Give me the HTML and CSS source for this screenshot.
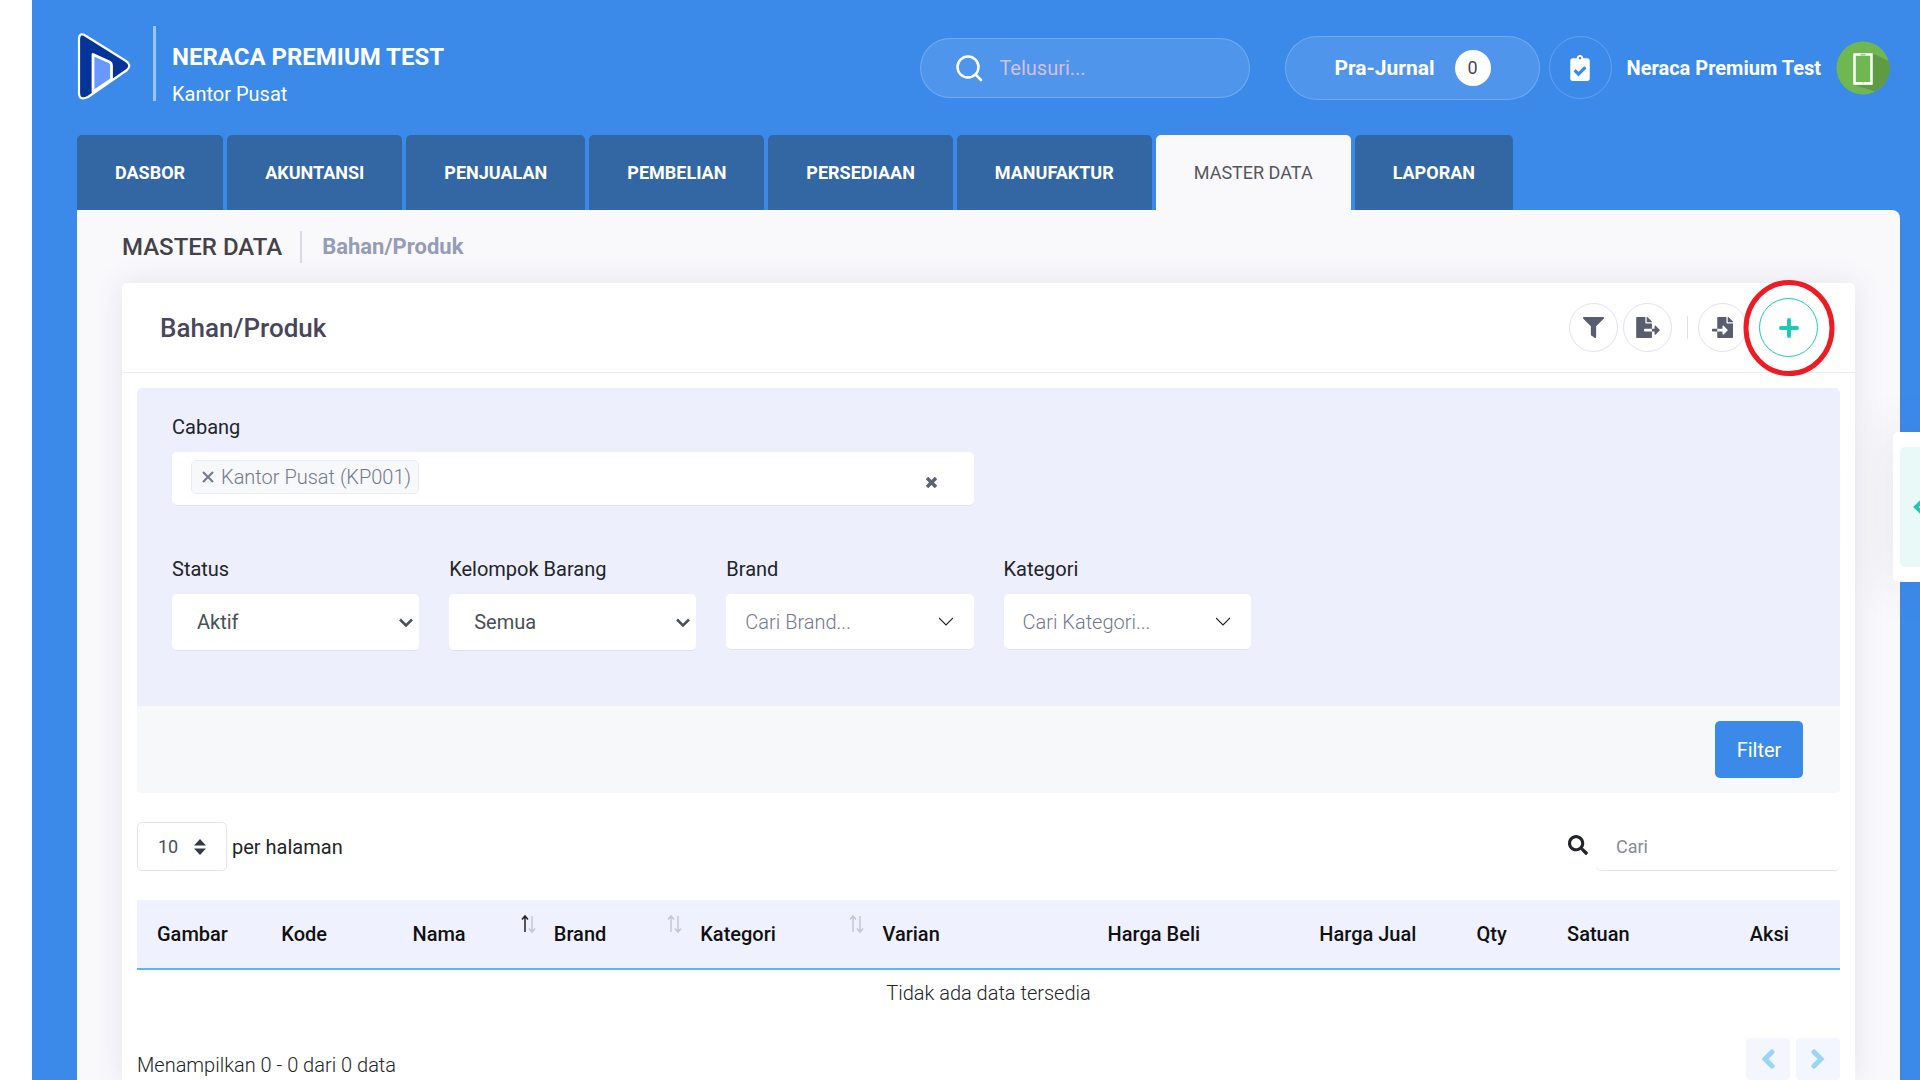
FILE: index.html
```html
<!DOCTYPE html>
<html lang="id">
<head>
  <meta charset="UTF-8" />
  <title>Bahan/Produk</title>
  <link rel="stylesheet" href="styles.css">
</head>
<body>
  <header class="topbar">
    <a class="brand" href="#" aria-label="Neraca">
      <svg width="54" height="68" viewBox="0 0 54 68">
        <path d="M2 7C2 2 5 1 9 4L49 29Q55 33 50 38L11 65Q2 69 2 61Z" fill="#053399" stroke="#fff" stroke-width="2.2" stroke-linejoin="round"/>
        <path d="M16 60V22.500L32.500 30Q34.500 31 34.500 33V47.500Z" fill="#6999ff" stroke="#fff" stroke-width="2.8" stroke-linejoin="round"/>
      </svg>
    </a>
    <div class="company">
      <div class="company-name">NERACA PREMIUM TEST</div>
      <div class="company-branch">Kantor Pusat</div>
    </div>

    <label class="search">
      <svg width="28" height="28" viewBox="0 0 28 28" fill="none" stroke="#fff" stroke-width="2.500" stroke-linecap="round">
        <circle cx="13" cy="13" r="10.500"/>
        <path d="M20.500 20.500L26 26"/>
      </svg>
      <input type="text" placeholder="Telusuri..." aria-label="Telusuri" />
    </label>

    <button class="journal">Pra-Jurnal <span class="count">0</span></button>

    <div class="user">
      <button class="task" aria-label="Tugas">
        <svg width="20" height="26" viewBox="0 0 384 512" fill="#fff">
          <path d="M336 64h-80c0-35.300-28.700-64-64-64s-64 28.700-64 64H48C21.500 64 0 85.500 0 112v352c0 26.500 21.500 48 48 48h288c26.500 0 48-21.500 48-48V112c0-26.500-21.500-48-48-48zM192 40c13.300 0 24 10.700 24 24s-10.700 24-24 24-24-10.700-24-24 10.700-24 24-24zm121.200 231.800l-143 141.800c-4.700 4.700-12.300 4.600-17-.1l-82.600-83.300c-4.700-4.700-4.600-12.300.1-17L99.100 285c4.700-4.700 12.300-4.600 17 .1l46 46.400 106-105.200c4.700-4.700 12.300-4.600 17 .1l28.200 28.400c4.700 4.800 4.600 12.300-.1 17z"/>
        </svg>
      </button>
      <a class="user-name" href="#">Neraca Premium Test</a>
      <svg class="avatar" width="54" height="54" viewBox="0 0 54 54">
        <circle cx="27" cy="27" r="26.500" fill="#6fb851"/>
        <path d="M36.500 12.500L53 20A26.500 26.500 0 0 1 39 50.500L18 43.500Z" fill="#5f9b43"/>
        <rect x="18.500" y="13.500" width="17" height="29" fill="#6fb851" stroke="#fff" stroke-width="2.500"/>
        <path d="M18 41h18v2.500H18z" fill="#fff"/>
        <path d="M24.500 13.800h5M26.500 42h1" stroke="#6fb851"/>
      </svg>
    </div>
  </header>

  <nav class="tabs">
    <a href="#">DASBOR</a>
    <a href="#">AKUNTANSI</a>
    <a href="#">PENJUALAN</a>
    <a href="#">PEMBELIAN</a>
    <a href="#">PERSEDIAAN</a>
    <a href="#">MANUFAKTUR</a>
    <a href="#" class="active">MASTER DATA</a>
    <a href="#">LAPORAN</a>
  </nav>

  <main class="content">
    <div class="breadcrumb">
      <h1>MASTER DATA</h1>
      <a href="#">Bahan/Produk</a>
    </div>

    <section class="card">
      <div class="card-head">
        <h2>Bahan/Produk</h2>
        <div class="tools">
          <button class="tool" aria-label="Filter">
            <svg width="21" height="21" viewBox="0 0 512 512">
              <path d="M487.976 0H24.028C2.710 0-8.047 25.866 7.058 40.971L192 225.941V432c0 7.831 3.821 15.170 10.237 19.662l80 55.980C298.020 518.690 320 507.493 320 487.980V225.941l184.947-184.970C520.021 25.896 509.338 0 487.976 0z"/>
            </svg>
          </button>
          <button class="tool" aria-label="Ekspor">
            <svg width="24" height="21" viewBox="0 0 576 512">
              <path d="M384 121.900c0-6.300-2.500-12.400-7-16.900L279.100 7c-4.500-4.500-10.600-7-17-7H256v128h128zM571 308l-95.700-96.400c-10.100-10.100-27.400-3-27.400 11.300V288h-64v64h64v65.200c0 14.300 17.300 21.400 27.400 11.300L571 332c6.600-6.600 6.600-17.400 0-24zm-379 28v-32c0-8.800 7.200-16 16-16h176V160H248c-13.200 0-24-10.800-24-24V0H24C10.700 0 0 10.700 0 24v464c0 13.300 10.700 24 24 24h336c13.300 0 24-10.700 24-24V352H208c-8.800 0-16-7.200-16-16z"/>
            </svg>
          </button>
          <span class="tool-divider"></span>
          <button class="tool" aria-label="Impor">
            <svg width="21" height="21" viewBox="0 0 512 512">
              <path d="M16 288c-8.800 0-16 7.200-16 16v32c0 8.800 7.200 16 16 16h112v-64zm489-183L407.100 7c-4.500-4.500-10.600-7-17-7H384v128h128v-6.100c0-6.300-2.500-12.400-7-16.900zm-153 31V0H152c-13.300 0-24 10.700-24 24v264h128v-65.200c0-14.300 17.300-21.400 27.400-11.300L379 308c6.600 6.700 6.600 17.400 0 24l-95.700 96.400c-10.100 10.100-27.400 3-27.400-11.300V352H128v136c0 13.300 10.700 24 24 24h336c13.300 0 24-10.700 24-24V160H376c-13.200 0-24-10.800-24-24z"/>
            </svg>
          </button>
          <div class="add-wrap">
            <button class="tool add" aria-label="Tambah">
              <svg width="20" height="20" viewBox="0 0 20 20" stroke-width="4" stroke-linecap="round">
                <path d="M10 2v16M2 10h16"/>
              </svg>
            </button>
            <svg class="marker" width="92" height="96" viewBox="0 0 92 96">
              <ellipse cx="46" cy="48" rx="43" ry="45.500" fill="none" stroke="#ed1c24" stroke-width="5"/>
            </svg>
          </div>
        </div>
      </div>

      <div class="card-body">
        <form class="filter">
          <div class="filter-fields">
            <div class="field wide">
              <label for="cabang">Cabang</label>
              <div class="multi">
                <span class="tag"><button type="button" aria-label="Hapus">
                  <svg width="12" height="12" viewBox="0 0 12 12" fill="none" stroke="#74788d" stroke-width="2"><path d="M1 1l10 10M11 1L1 11"/></svg>
                </button>Kantor Pusat (KP001)</span>
                <input type="text" id="cabang" />
                <button type="button" class="clear" aria-label="Bersihkan">
                  <svg width="11" height="11" viewBox="0 0 11 11" fill="none" stroke="#5c6173" stroke-width="3.500"><path d="M1 1l9 9M10 1L1 10"/></svg>
                </button>
              </div>
            </div>
            <div class="field">
              <label for="status">Status</label>
              <div class="pick">
                <select id="status"><option>Aktif</option></select>
                <svg width="14" height="10" viewBox="0 0 14 10"><path d="M1 1.500l6 6 6-6"/></svg>
              </div>
            </div>
            <div class="field">
              <label for="kelompok">Kelompok Barang</label>
              <div class="pick">
                <select id="kelompok"><option>Semua</option></select>
                <svg width="14" height="10" viewBox="0 0 14 10"><path d="M1 1.500l6 6 6-6"/></svg>
              </div>
            </div>
            <div class="field">
              <label for="brand">Brand</label>
              <div class="pick lookup">
                <select id="brand"><option>Cari Brand...</option></select>
                <svg width="14" height="10" viewBox="0 0 14 10"><path d="M0 1l7 7 7-7"/></svg>
              </div>
            </div>
            <div class="field">
              <label for="kategori">Kategori</label>
              <div class="pick lookup">
                <select id="kategori"><option>Cari Kategori...</option></select>
                <svg width="14" height="10" viewBox="0 0 14 10"><path d="M0 1l7 7 7-7"/></svg>
              </div>
            </div>
          </div>
          <div class="filter-foot">
            <button type="button" class="btn-filter">Filter</button>
          </div>
        </form>

        <div class="table-bar">
          <label class="per-page">
            <span class="page-size">
              <select><option>10</option></select>
              <svg width="12" height="16" viewBox="0 0 12 16" fill="#343a40"><path d="M0 6.500L6 0l6 6.500zM0 9.500h12L6 16z"/></svg>
            </span>
            per halaman
          </label>
          <label class="table-search">
            <svg width="20" height="20" viewBox="0 0 512 512" fill="#212529">
              <path d="M505 442.700L405.300 343c-4.500-4.500-10.600-7-17-7H372c27.600-35.300 44-79.700 44-128C416 93.100 322.900 0 208 0S0 93.100 0 208s93.100 208 208 208c48.300 0 92.700-16.400 128-44v16.300c0 6.400 2.500 12.500 7 17l99.700 99.700c9.400 9.400 24.600 9.400 33.900 0l28.300-28.300c9.400-9.400 9.400-24.600.1-34zM208 336c-70.700 0-128-57.200-128-128 0-70.700 57.200-128 128-128 70.700 0 128 57.200 128 128 0 70.700-57.200 128-128 128z"/>
            </svg>
            <input type="text" placeholder="Cari" aria-label="Cari" />
          </label>
        </div>

        <table class="products">
          <thead>
            <tr>
              <th class="c-gambar">Gambar</th>
              <th class="c-kode">Kode</th>
              <th class="c-nama">
                <div class="sort asc">Nama
                  <svg width="12" height="18" viewBox="0 0 12 18"><path class="up" d="M3 17V1M0 4.500L3 1l3 3.500"/><path class="down" d="M10 1v16M7 13.500l3 3.500 3-3.500"/></svg>
                </div>
              </th>
              <th class="c-brand">
                <div class="sort">Brand
                  <svg width="12" height="18" viewBox="0 0 12 18"><path class="up" d="M3 17V1M0 4.500L3 1l3 3.500"/><path class="down" d="M10 1v16M7 13.500l3 3.500 3-3.500"/></svg>
                </div>
              </th>
              <th class="c-kategori">
                <div class="sort">Kategori
                  <svg width="12" height="18" viewBox="0 0 12 18"><path class="up" d="M3 17V1M0 4.500L3 1l3 3.500"/><path class="down" d="M10 1v16M7 13.500l3 3.500 3-3.500"/></svg>
                </div>
              </th>
              <th class="c-varian">Varian</th>
              <th class="c-beli">Harga Beli</th>
              <th class="c-jual">Harga Jual</th>
              <th class="c-qty">Qty</th>
              <th class="c-satuan">Satuan</th>
              <th class="c-aksi">Aksi</th>
            </tr>
          </thead>
          <tbody>
            <tr><td colspan="11">Tidak ada data tersedia</td></tr>
          </tbody>
        </table>

        <div class="table-foot">
          <span>Menampilkan 0 - 0 dari 0 data</span>
          <div class="pager">
            <button aria-label="Sebelumnya"><svg width="14" height="20" viewBox="0 0 14 20"><path d="M11 3l-7 7 7 7"/></svg></button>
            <button aria-label="Berikutnya"><svg width="14" height="20" viewBox="0 0 14 20"><path d="M3 3l7 7-7 7"/></svg></button>
          </div>
        </div>
      </div>
    </section>
  </main>

  <aside class="drawer">
    <button aria-label="Buka panel">
      <svg width="14" height="14" viewBox="0 0 14 14" fill="none" stroke="#1dc9b7" stroke-width="4"><path d="M10 1L4 7l6 6"/></svg>
    </button>
  </aside>
</body>
</html>
```

FILE: styles.css
```css
* {
  box-sizing: border-box;
}

html {
  background-color: #fff;
}

body {
  margin: 0 0 0 32px;
  min-height: 100vh;
  background-color: #3b8aea;
  font-family: Roboto, sans-serif;
  font-size: 20px;
  line-height: 30px;
  color: #212529;
  display: flex;
  flex-direction: column;
  overflow-x: hidden;
}

button, input, select {
  font: inherit;
  color: inherit;
  background: none;
  border: none;
  padding: 0;
  outline: none;
}

button {
  cursor: pointer;
}

a {
  color: inherit;
  text-decoration: none;
}

svg {
  display: block;
  flex: none;
}

/* header */
.topbar {
  height: 135px;
  padding: 0 30px 0 45px;
  display: flex;
  align-items: center;
  color: #fff;
}

.brand {
  width: 76px;
  padding-bottom: 3px;
}

.company {
  margin-right: auto;
  padding: 16px 0 0 16px;
  border-left: 3px solid rgba(255, 255, 255, 0.5);
  height: 75px;
  margin-bottom: 8px;
}

.company-name {
  font-size: 24px;
  font-weight: 700;
}

.company-branch {
  padding-top: 8px;
  line-height: 28px;
}

.search {
  width: 330px;
  height: 60px;
  margin-right: 35px;
  padding: 0 34px;
  display: flex;
  align-items: center;
  gap: 16px;
  border: 1px solid rgba(255, 255, 255, 0.2);
  border-radius: 30px;
  background-color: rgba(255, 255, 255, 0.1);
}

.search input {
  width: 100%;
}

.search input::placeholder {
  color: #d3bfe4;
}

.journal {
  height: 64px;
  padding: 0 48px;
  display: flex;
  align-items: center;
  gap: 20px;
  font-size: 21px;
  font-weight: 700;
  border: 1px solid rgba(255, 255, 255, 0.2);
  border-radius: 32px;
  background-color: rgba(255, 255, 255, 0.1);
}

.count {
  width: 36px;
  line-height: 36px;
  border-radius: 50%;
  background-color: #fff;
  color: #48465b;
  font-size: 18px;
  font-weight: 400;
}

.user {
  display: flex;
  align-items: center;
  margin-left: 9px;
}

.task {
  width: 63px;
  height: 63px;
  display: grid;
  place-items: center;
  border: 1px solid rgba(255, 255, 255, 0.2);
  border-radius: 50%;
}

.user-name {
  margin: 0 15px;
  font-weight: 700;
}

/* main menu */
.tabs {
  display: flex;
  gap: 4px;
  padding-left: 45px;
}

.tabs a {
  padding: 0 38px;
  line-height: 75px;
  border-radius: 5px 5px 0 0;
  background-color: #3267a3;
  color: #fff;
  font-size: 18px;
  font-weight: 700;
}

.tabs .active {
  background-color: #f9f9fc;
  color: #55575c;
  font-weight: 400;
}

/* content */
.content {
  flex: 1;
  margin: 0 20px 0 45px;
  padding: 0 45px;
  border-radius: 0 8px 0 0;
  background-color: #f9f9fc;
  display: flex;
  flex-direction: column;
}

.breadcrumb {
  height: 73px;
  display: flex;
  align-items: center;
}

.breadcrumb h1 {
  margin: 0;
  padding-right: 18px;
  border-right: 2px solid #dcdae8;
  font-size: 24px;
  font-weight: 500;
  line-height: 32px;
  color: #434349;
}

.breadcrumb a {
  padding-left: 20px;
  font-size: 22px;
  font-weight: 700;
  color: #959cb6;
}

.card {
  flex: 1;
  border-radius: 5px 5px 0 0;
  background-color: #fff;
  box-shadow: 0 0 30px rgba(82, 63, 105, 0.12);
}

.card-head {
  height: 90px;
  padding: 0 37px 0 38px;
  display: flex;
  align-items: center;
  justify-content: space-between;
  border-bottom: 1px solid #ebedf2;
}

.card-head h2 {
  margin: 0;
  font-size: 26px;
  font-weight: 500;
  color: #48465b;
}

.tools {
  display: flex;
  align-items: center;
  gap: 5px;
}

.tool {
  width: 49px;
  height: 49px;
  display: grid;
  place-items: center;
  border: 1px solid #e2e2ec;
  border-radius: 50%;
  fill: #595d6e;
}

.tool-divider {
  width: 1px;
  height: 23px;
  margin: 0 5px 0 10px;
  background-color: #dfdfe8;
}

.add-wrap {
  position: relative;
  margin-left: 7px;
}

.add {
  width: 59px;
  height: 59px;
  border-color: #1dc9b7;
  stroke: #1dc9b7;
}

.marker {
  position: absolute;
  left: -16px;
  top: -18px;
  pointer-events: none;
}

.card-body {
  padding: 15px 15px 0;
}

/* filter */
.filter {
  border-radius: 5px;
  overflow: hidden;
  background-color: #edeffd;
}

.filter-fields {
  display: grid;
  grid-template-columns: repeat(6, 1fr);
  gap: 48px 30px;
  padding: 24px 35px 55px;
}

.field {
  min-width: 0;
}

.wide {
  grid-column: span 3;
}

.wide + .field {
  grid-column-start: 1;
}

.field label {
  display: block;
  margin-bottom: 10px;
}

.multi {
  height: 54px;
  padding: 0 37px 0 19px;
  display: flex;
  align-items: center;
  border-radius: 5px;
  border-bottom: 1px solid #dfe1ee;
  background-color: #fff;
}

.multi input {
  flex: 1;
  min-width: 0;
}

.tag {
  height: 34px;
  padding: 0 7px 0 10px;
  margin-bottom: 4px;
  display: flex;
  align-items: center;
  gap: 7px;
  border: 1px solid #ebedf2;
  border-radius: 5px;
  background-color: #f7f8fa;
  color: #74788d;
  font-weight: 300;
}

.clear {
  padding-top: 8px;
}

.pick {
  display: grid;
  align-items: center;
}

.pick select {
  grid-area: 1 / 1;
  width: 100%;
  height: 57px;
  padding: 0 25px;
  appearance: none;
  border-radius: 5px;
  border-bottom: 1px solid #dfe1ee;
  background-color: #fff;
  color: #495057;
}

.pick svg {
  grid-area: 1 / 1;
  justify-self: end;
  margin-right: 6px;
  fill: none;
  stroke: #495057;
  stroke-width: 2.5;
  pointer-events: none;
}

.lookup select {
  height: 56px;
  padding: 0 19px;
  color: #74788d;
  font-weight: 300;
}

.lookup svg {
  margin-right: 21px;
  stroke: #222;
  stroke-width: 1.2;
}

.filter-foot {
  display: flex;
  justify-content: flex-end;
  padding: 15px 37px;
  background-color: #f7f8fa;
}

.btn-filter {
  width: 88px;
  height: 57px;
  border-radius: 5px;
  background-color: #3b8aea;
  color: #fff;
}

/* table */
.table-bar {
  display: flex;
  justify-content: space-between;
  align-items: center;
  padding: 29px 0;
}

.per-page {
  display: flex;
  align-items: center;
  gap: 5px;
}

.page-size {
  display: grid;
  align-items: center;
}

.page-size select {
  grid-area: 1 / 1;
  width: 90px;
  height: 49px;
  padding: 0 20px;
  appearance: none;
  border: 1px solid #e2e5ec;
  border-radius: 5px;
  color: #495057;
  font-size: 18px;
}

.page-size svg {
  grid-area: 1 / 1;
  justify-self: end;
  margin-right: 21px;
  pointer-events: none;
}

.table-search {
  display: flex;
  align-items: center;
  gap: 8px;
}

.table-search svg {
  margin-bottom: 4px;
}

.table-search input {
  width: 244px;
  height: 49px;
  padding: 0 20px;
  border-bottom: 1px solid #e2e5ec;
  border-radius: 5px;
  font-size: 18px;
}

.table-search input::placeholder {
  color: #898b96;
}

.products {
  width: 100%;
  table-layout: fixed;
  border-collapse: collapse;
}

.products th {
  height: 69px;
  padding: 0 0 0 20px;
  text-align: left;
  font-weight: 500;
  color: #111;
  background-color: #eff1ff;
  border-bottom: 2px solid #5bb9ea;
}

.products td {
  height: 46px;
  padding: 0;
  text-align: center;
  font-weight: 300;
}

.products .c-gambar { width: 7.3%; }
.products .c-kode { width: 7.7%; }
.products .c-nama { width: 8.3%; }
.products .c-brand { width: 8.6%; }
.products .c-kategori { width: 10.7%; }
.products .c-varian { width: 10.9%; }
.products .c-beli { width: 10.1%; padding: 0 20px 0 0; text-align: right; }
.products .c-jual { width: 12.7%; padding: 0 20px 0 0; text-align: right; }
.products .c-qty { width: 6.5%; padding: 0; text-align: center; }
.products .c-satuan { width: 8.9%; }
.products .c-aksi { width: 8.3%; padding: 0; text-align: center; }

.sort {
  display: flex;
  justify-content: space-between;
}

.sort svg {
  margin-top: -4px;
  overflow: visible;
  fill: none;
  stroke: #c3c6d4;
  stroke-width: 1.5;
}

.asc .up {
  stroke: #222;
}

.table-foot {
  display: flex;
  justify-content: space-between;
  padding-top: 23px;
  font-weight: 300;
}

.table-foot span {
  padding-top: 12px;
}

.pager {
  display: flex;
  gap: 6px;
}

.pager button {
  width: 44px;
  height: 42px;
  display: grid;
  place-items: center;
  border-radius: 4px;
  background-color: #f3f6ff;
}

.pager svg {
  fill: none;
  stroke: #9bd5f3;
  stroke-width: 5;
  stroke-linecap: round;
}

/* side panel handle */
.drawer {
  position: fixed;
  right: 0;
  top: 432px;
  width: 27px;
  height: 150px;
  padding: 15px 0 15px 7px;
  border-radius: 5px 0 0 5px;
  background-color: #fff;
  box-shadow: 0 0 50px rgba(82, 63, 105, 0.15);
  overflow: hidden;
}

.drawer button {
  width: 34px;
  height: 120px;
  padding-left: 12px;
  border-radius: 5px;
  background-color: #e8f9f8;
}
```
